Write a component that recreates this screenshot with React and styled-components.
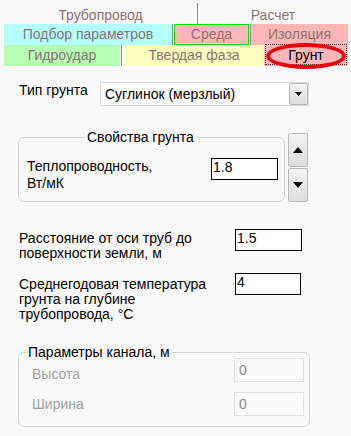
import React from "react";
import styled, { createGlobalStyle } from "styled-components";

const Global = createGlobalStyle`
  html, body { margin: 0; padding: 0; }
  body {
    background: #f9f9f9;
    font-family: "Liberation Sans", Arial, sans-serif;
    font-size: 14px;
    color: #000;
  }
`;

const Page = styled.div`
  width: 351px;
  height: 436px;
  overflow: hidden;
`;

const TabBar = styled.div`
  padding-left: 4px;
  width: 344px;
`;

const HeaderRow = styled.div`
  display: flex;
  height: 24px;
`;

const HeaderCell = styled.div`
  width: ${(p) => p.$w}px;
  text-align: center;
  padding-top: 8px;
  line-height: 15px;
  color: #8a7272;
`;

const HeaderSep = styled.div`
  width: 1px;
  margin-top: 3px;
  background: #9d8a8a;
`;

const TabRow = styled.div`
  display: flex;
  height: 21px;
`;

const Tab = styled.div`
  position: relative;
  box-sizing: border-box;
  width: ${(p) => p.$w}px;
  background: ${(p) => p.$bg};
  color: ${(p) => (p.$active ? "#000" : "#8a7272")};
  border: ${(p) => (p.$focus ? "1px solid #00e000" : "none")};
  text-align: center;
  line-height: ${(p) => (p.$focus ? 19 : 21)}px;
  white-space: nowrap;
  ${(p) =>
    p.$active &&
    `
    &::before {
      content: "";
      position: absolute;
      left: 1px;
      right: 1px;
      top: -1px;
      bottom: 1px;
      border: 1px dotted #333;
    }
  `}
`;

const Ring = styled.span`
  position: absolute;
  left: 2px;
  top: -2px;
  width: 80px;
  height: 26px;
  box-sizing: border-box;
  border: 4px solid #e8000b;
  border-radius: 50%;
`;

const TabSep = styled.div`
  width: 1px;
  background: #8e8e8e;
  margin: 0 ${(p) => p.$r || 0}px 0 ${(p) => p.$l || 0}px;
`;

const Content = styled.div`
  padding-left: 18px;
`;

const TypeRow = styled.div`
  display: flex;
  align-items: flex-start;
  margin-top: 16px;
`;

const TypeLabel = styled.div`
  margin-left: 1px;
  width: 81px;
  padding-top: 1px;
  line-height: 15px;
`;

const Select = styled.div`
  box-sizing: border-box;
  width: 209px;
  height: 24px;
  border: 1px solid #d9d9d9;
  background: #fff;
  display: flex;
`;

const SelectText = styled.div`
  flex: 1;
  padding: 4px 0 0 4px;
  line-height: 15px;
`;

const PushButton = styled.div`
  box-sizing: border-box;
  width: ${(p) => p.$w}px;
  height: ${(p) => p.$h}px;
  border: 1px solid #b9b9b9;
  border-radius: 2px;
  background: linear-gradient(#f3f3f3, #dcdcdc);
  display: flex;
  align-items: center;
  justify-content: center;
`;

const GroupRow = styled.div`
  display: flex;
  align-items: flex-start;
  margin-top: 25px;
`;

const Group = styled.fieldset`
  box-sizing: border-box;
  width: ${(p) => p.$w}px;
  margin: ${(p) => p.$mt || 0}px 0 0 0;
  padding: ${(p) => p.$pad};
  min-width: 0;
  border: 1px solid #d6d6d6;
  border-radius: 6px;
`;

const Legend = styled.legend`
  line-height: 12px;
  padding: 0 2px;
  margin-left: ${(p) => p.$ml}px;
  color: #000;
`;

const PropRow = styled.div`
  display: flex;
  justify-content: space-between;
  align-items: flex-start;
`;

const PropLabel = styled.div`
  width: 140px;
  line-height: 17px;
`;

const Field = styled.div`
  box-sizing: border-box;
  width: ${(p) => p.$w}px;
  height: ${(p) => p.$h}px;
  border: 1px solid ${(p) => (p.$disabled ? "#e2e2e2" : "#000")};
  background: ${(p) => (p.$disabled ? "#f9f9f9" : "#fff")};
  color: ${(p) => (p.$disabled ? "#8a8a8a" : "#000")};
  padding: ${(p) => (p.$disabled ? "0 0 0 4px" : "1px 0 0 1px")};
  line-height: ${(p) => (p.$disabled ? "22px" : "15px")};
`;

const Spinner = styled.div`
  display: flex;
  flex-direction: column;
  gap: 1px;
  margin: 2px 0 0 3px;
`;

const FieldRow = styled.div`
  display: grid;
  grid-template-columns: 200px auto;
  column-gap: 17px;
  align-items: start;
  margin-top: ${(p) => p.$mt}px;
`;

const FieldLabel = styled.div`
  margin-left: 1px;
  padding-top: ${(p) => p.$pt}px;
  line-height: 15px;
`;

const ChannelRow = styled.div`
  display: grid;
  grid-template-columns: 1fr 70px;
  align-items: start;
  margin-top: ${(p) => p.$mt || 0}px;
`;

const ChannelLabel = styled.div`
  color: #a0a0a0;
  padding-top: ${(p) => p.$pt}px;
  line-height: 15px;
`;

const Tri = ({ up, w = 10, h = 6 }) => (
  <svg width={w} height={h} viewBox={`0 0 ${w} ${h}`}>
    <polygon
      points={up ? `0,${h} ${w / 2},0 ${w},${h}` : `0,0 ${w},0 ${w / 2},${h}`}
      fill="#000"
    />
  </svg>
);

export default function App() {
  return (
    <Page>
      <Global />
      <TabBar>
        <HeaderRow>
          <HeaderCell $w={193}>Трубопровод</HeaderCell>
          <HeaderSep />
          <HeaderCell $w={150}>Расчет</HeaderCell>
        </HeaderRow>
        <TabRow>
          <Tab $w={168} $bg="#b4ffff">Подбор параметров</Tab>
          <TabSep $r={1} />
          <Tab $w={75} $bg="#ffb6b6" $focus>Среда</Tab>
          <TabSep $l={1} />
          <Tab $w={97} $bg="#ffb6b6">Изоляция</Tab>
        </TabRow>
        <TabRow>
          <Tab $w={116} $bg="#b4ffb4">Гидроудар</Tab>
          <TabSep $l={1} $r={2} />
          <Tab $w={140} $bg="#ffffc0">Твердая фаза</Tab>
          <Tab $w={84} $bg="#ffb6b6" $active>
            Грунт
            <Ring />
          </Tab>
        </TabRow>
      </TabBar>

      <Content>
        <TypeRow>
          <TypeLabel>Тип грунта</TypeLabel>
          <Select>
            <SelectText>Суглинок (мерзлый)</SelectText>
            <PushButton $w={19} $h={22}>
              <Tri w={7} h={4} />
            </PushButton>
          </Select>
        </TypeRow>

        <GroupRow>
          <Group $w={267} $pad="15px 6px 9px 8px">
            <Legend $ml={58}>Свойства грунта</Legend>
            <PropRow>
              <PropLabel>Теплопроводность, Вт/мК</PropLabel>
              <Field $w={67} $h={22}>1.8</Field>
            </PropRow>
          </Group>
          <Spinner>
            <PushButton $w={20} $h={34}>
              <Tri up w={10} h={6} />
            </PushButton>
            <PushButton $w={20} $h={34}>
              <Tri w={10} h={6} />
            </PushButton>
          </Spinner>
        </GroupRow>

        <FieldRow $mt={27}>
          <FieldLabel $pt={2}>Расстояние от оси труб до поверхности земли, м</FieldLabel>
          <Field $w={67} $h={22}>1.5</Field>
        </FieldRow>
        <FieldRow $mt={12}>
          <FieldLabel $pt={4}>Среднегодовая температура грунта на глубине трубопровода, °С</FieldLabel>
          <Field $w={66} $h={22}>4</Field>
        </FieldRow>

        <Group $w={292} $mt={24} $pad="0 5px 10px 13px">
          <Legend $ml={-6}>Параметры канала, м</Legend>
          <ChannelRow>
            <ChannelLabel $pt={9}>Высота</ChannelLabel>
            <Field $w={70} $h={24} $disabled>0</Field>
          </ChannelRow>
          <ChannelRow $mt={10}>
            <ChannelLabel $pt={5}>Ширина</ChannelLabel>
            <Field $w={70} $h={24} $disabled>0</Field>
          </ChannelRow>
        </Group>
      </Content>
    </Page>
  );
}
